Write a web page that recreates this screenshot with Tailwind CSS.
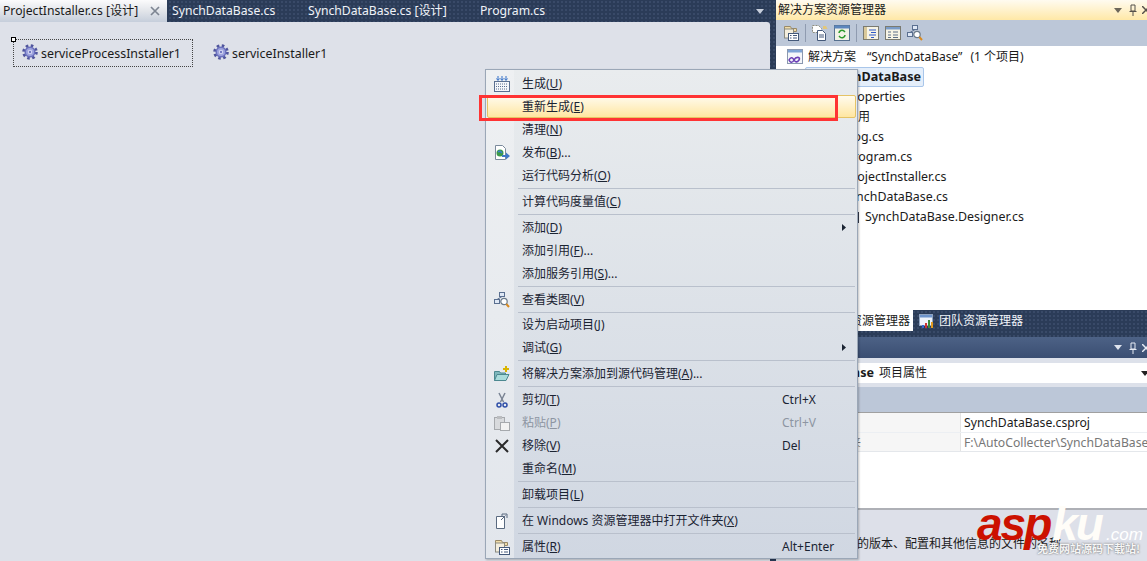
<!DOCTYPE html>
<html lang="zh-CN">
<head>
<meta charset="utf-8">
<script src="https://cdn.jsdelivr.net/npm/@tailwindcss/browser@4"></script>
</head>
<body class="m-0 overflow-hidden">
<svg class="absolute w-0 h-0">
  <defs>
    <symbol id="gear" viewBox="0 0 16 16">
      <circle cx="8" cy="8" r="6.300" fill="none" stroke="#4f549c" stroke-width="3" stroke-dasharray="2.500 2.450"/>
      <circle cx="8" cy="8" r="5.500" fill="#6a70bd"/>
      <circle cx="8" cy="8" r="4" fill="#9ea3de"/>
      <circle cx="8" cy="8" r="2.200" fill="#d8daf4"/>
      <circle cx="8" cy="8" r="1.200" fill="#7278c2"/>
    </symbol>
    <symbol id="props" viewBox="0 0 16 16">
      <path d="M1.500 1.500h6l1 2h5v3h-12z" fill="#f0dca8" stroke="#9a8a68"/>
      <rect x="1.500" y="4" width="9" height="9" fill="#f4eedd" stroke="#8a8a80"/>
      <rect x="5.500" y="8.500" width="10" height="7" fill="#fff" stroke="#44597a"/>
      <path d="M7 10.500h1.500M10 10.500h4M7 13h1.500M10 13h4" stroke="#44597a"/>
    </symbol>
    <symbol id="classview" viewBox="0 0 16 16">
      <rect x="5.500" y=".5" width="5" height="4" fill="#dfe8f5" stroke="#5a6f90"/>
      <rect x=".5" y="7.500" width="5" height="4" fill="#dfe8f5" stroke="#5a6f90"/>
      <path d="M8 4.500 3 7.500" stroke="#5a6f90"/>
      <circle cx="10" cy="9.500" r="3.200" fill="#fff" stroke="#6a7a8a" stroke-width="1.200"/>
      <path d="m12.300 12 2.700 3" stroke="#d98a20" stroke-width="2"/>
    </symbol>
  </defs>
</svg>

<div class="relative w-[1147px] h-[561px] overflow-hidden flex bg-[#2b3c58] bg-[radial-gradient(#394a68_1px,transparent_1px)] bg-[length:4px_4px] text-[12.4px] leading-[18px] text-[#1a1a1a] font-['Noto_Sans','Noto_Sans_CJK_SC',sans-serif]">

  <!-- left document well -->
  <div class="w-[770px] flex flex-col shrink-0">
    <div class="h-[22px] flex items-center text-[#f0f3f8] text-[12.2px] shrink-0">
      <div class="w-[167px] h-[22px] flex items-center pl-[3px] text-[#1a1a1a] bg-gradient-to-b from-[#fbfbfc] via-[#e2e5ea] to-[#c6cedb]">
        <span class="w-[147px] whitespace-nowrap">ProjectInstaller.cs [设计]</span>
        <svg class="w-[10px] h-[10px]" viewBox="0 0 10 10"><path d="m1 1 8 8M9 1 1 9" stroke="#7d8592" stroke-width="1.700"/></svg>
      </div>
      <span class="ml-[5px] w-[136px] whitespace-nowrap">SynchDataBase.cs</span>
      <span class="w-[172px] whitespace-nowrap">SynchDataBase.cs [设计]</span>
      <span class="w-[276px] whitespace-nowrap">Program.cs</span>
      <svg class="w-[8px] h-[5px]" viewBox="0 0 8 5"><path d="M0 0h8L4 5z" fill="#c8cfdc"/></svg>
    </div>
    <div class="flex-1 bg-[#dee1e9] rounded-tr-[3px] relative">
      <div class="flex items-start pt-[17px] pl-[13px]">
        <div class="relative w-[180px] h-[28px] border border-dotted border-[#444] flex items-center pl-[8px] gap-[3px]">
          <span class="absolute left-[-3px] top-[-3px] w-[5px] h-[5px] bg-white border border-black"></span>
          <svg class="w-[16px] h-[16px] -mt-[2px]"><use href="#gear"/></svg>
          <span class="whitespace-nowrap pt-[2px]">serviceProcessInstaller1</span>
        </div>
        <div class="flex items-center h-[28px] ml-[20px] gap-[3px]">
          <svg class="w-[16px] h-[16px] -mt-[2px]"><use href="#gear"/></svg>
          <span class="whitespace-nowrap pt-[2px]">serviceInstaller1</span>
        </div>
      </div>
    </div>
  </div>

  <div class="w-[6px] shrink-0"></div>

  <!-- right panels -->
  <div class="w-[371px] flex flex-col shrink-0 bg-white">
    <div class="h-[20px] flex items-center pl-[2px] text-[12px] bg-gradient-to-b from-[#fffbf0] to-[#ffe8a6] whitespace-nowrap shrink-0">
      <span class="flex-1">解决方案资源管理器</span>
      <svg class="w-[8px] h-[5px] mr-[7px]" viewBox="0 0 8 5"><path d="M0 0h8L4 5z" fill="#6d675a"/></svg>
      <svg class="w-[8px] h-[12px] mr-[5px]" viewBox="0 0 8 12"><path d="M2 1h4v6H2zM0.500 7.500h7M4 8v4" fill="none" stroke="#55504a"/></svg>
      <svg class="w-[8px] h-[8px] -mr-[3px]" viewBox="0 0 8 8"><path d="m0 0 8 8M8 0 0 8" stroke="#55504a" stroke-width="1.500"/></svg>
    </div>
    <div class="h-[26px] bg-[#bcc7d8] flex items-center pl-[7px] gap-[6px] shrink-0">
      <svg class="w-[16px] h-[16px]"><use href="#props"/></svg>
      <span class="w-px h-[18px] bg-[#8f9bb0]"></span>
      <svg class="w-[16px] h-[16px]" viewBox="0 0 16 16"><path d="M.5.500h6l3 3v4h-9z" fill="#fff" stroke="#8d8d80" stroke-dasharray="2 1"/><path d="M5.500 5.500h5l3 3v7h-8z" fill="#fff" stroke="#44597a"/><path d="M7 10h5M7 12h5" stroke="#44597a"/><path d="M11 1h3l1.500 3H11z" fill="#e3c77a"/></svg>
      <svg class="w-[16px] h-[16px]" viewBox="0 0 16 16"><rect x=".5" y=".5" width="15" height="15" fill="#f2f2e6" stroke="#56708f"/><rect x=".5" y=".5" width="15" height="3" fill="#5c86bd"/><path d="M5 8a3 3 0 0 1 5-2l1 1M11 10a3 3 0 0 1-5 2l-1-1" fill="none" stroke="#2d9a2d" stroke-width="1.600"/></svg>
      <span class="w-px h-[18px] bg-[#8f9bb0]"></span>
      <svg class="w-[16px] h-[16px]" viewBox="0 0 16 16"><rect x=".5" y="1.500" width="15" height="13" fill="#f7f4e6" stroke="#7a7a70"/><rect x="1" y="2" width="3" height="12" fill="#d9c89a"/><path d="M6 5h7M8 7.500h5M6 10h7M8 12.500h3" stroke="#2f59c8"/></svg>
      <svg class="w-[16px] h-[16px]" viewBox="0 0 16 16"><rect x=".5" y="1.500" width="15" height="13" fill="#f7f4e6" stroke="#7a7a70"/><rect x="1" y="2" width="14" height="2.500" fill="#7a9cc8"/><path d="M3 7h3M8 7h5M3 10h3M8 10h5M3 12.500h3M8 12.500h5" stroke="#5c6f88"/></svg>
      <svg class="w-[16px] h-[16px]"><use href="#classview"/></svg>
    </div>

    <div class="h-[264px] shrink-0 pt-[1px] whitespace-nowrap">
      <div class="h-[20px] flex items-center pl-[11px] gap-[5px]">
        <svg class="w-[16px] h-[16px] shrink-0" viewBox="0 0 16 16"><rect x=".5" y=".5" width="15" height="14" fill="#f4f6fa" stroke="#8a98b0"/><rect x="1" y="1" width="14" height="2.500" fill="#7ea4d6"/><path d="M2 11c2-4 4-2 5 0s3 3 5 0-3-4-5 0-4 2-5 0z" fill="none" stroke="#6a3fb5" stroke-width="1.600"/></svg>
        <span class="text-[12px]">解决方案<span class="ml-[11px]">“SynchDataBase”</span><span class="ml-[8px]">(1 个项目)</span></span>
      </div>
      <div class="h-[20px] flex items-center pl-[29px]">
        <span class="h-[20px] px-[2px] flex items-center font-bold text-[12.6px] border border-[#a9c6ea] rounded-[2px] bg-[#e4eefa] w-[119px] justify-end">SynchDataBase</span>
      </div>
      <div class="h-[20px] flex items-center pl-[69px]">Properties</div>
      <div class="h-[20px] flex items-center pl-[70px] text-[12px]">引用</div>
      <div class="h-[20px] flex items-center pl-[71px]">Log.cs</div>
      <div class="h-[20px] flex items-center pl-[70px]">Program.cs</div>
      <div class="h-[20px] flex items-center pl-[69px]">ProjectInstaller.cs</div>
      <div class="h-[20px] flex items-center pl-[67px]">SynchDataBase.cs</div>
      <div class="h-[20px] flex items-center pl-[89px] relative">
        <span class="absolute left-[81px] w-[2px] h-[11px] bg-[#33394a]"></span>SynchDataBase.Designer.cs
      </div>
    </div>

    <div class="h-[27px] shrink-0 flex items-start bg-[#2b3c58] bg-[radial-gradient(#394a68_1px,transparent_1px)] bg-[length:4px_4px] text-[12px] whitespace-nowrap">
      <div class="h-[21px] w-[137px] bg-white flex items-center justify-end pr-[3px]">解决方案资源管理器</div>
      <div class="h-[21px] flex items-center pl-[6px] gap-[4px] text-[#f0f3f8]">
        <svg class="w-[16px] h-[16px]" viewBox="0 0 16 16"><rect x=".5" y="1.500" width="13" height="11" fill="#eef3fa" stroke="#8fa3c0"/><rect x="1" y="2" width="12" height="2.500" fill="#6d94cc"/><path d="M6 15v-5h2v5z" fill="#c33"/><path d="M9 15v-8h2v8z" fill="#3a8a3a"/><path d="M12 15V9h2v6z" fill="#e09a20"/><path d="M3 15v-3h2v3z" fill="#36c"/></svg>
        <span>团队资源管理器</span>
      </div>
    </div>
    <div class="h-[21px] shrink-0 flex items-center justify-end bg-gradient-to-b from-[#4d6286] to-[#3a4e72]">
      <svg class="w-[8px] h-[5px] mr-[7px]" viewBox="0 0 8 5"><path d="M0 0h8L4 5z" fill="#dfe4ee"/></svg>
      <svg class="w-[8px] h-[12px] mr-[5px]" viewBox="0 0 8 12"><path d="M2 1h4v6H2zM0.500 7.500h7M4 8v4" fill="none" stroke="#e6ebf4"/></svg>
      <svg class="w-[8px] h-[8px] -mr-[3px]" viewBox="0 0 8 8"><path d="m0 0 8 8M8 0 0 8" stroke="#e6ebf4" stroke-width="1.500"/></svg>
    </div>
    <div class="h-[29px] shrink-0 bg-[#dde1ea] pt-[5px]">
      <div class="h-[20px] bg-white flex items-center whitespace-nowrap pl-[27px] relative">
        <span class="font-bold text-[12.6px] w-[71px] flex justify-end">SynchDataBase</span><span class="ml-[5px] text-[12px]">项目属性</span>
        <svg class="absolute right-[-2px] w-[8px] h-[5px]" viewBox="0 0 8 5"><path d="M0 0h8L4 5z" fill="#222"/></svg>
      </div>
    </div>
    <div class="h-[26px] shrink-0 bg-[#bcc7d8] border-b border-[#a0a0a0]"></div>
    <div class="flex-1 flex flex-col bg-white whitespace-nowrap text-[12.2px]">
      <div class="h-[20px] flex border-b border-[#eceff3] shrink-0">
        <div class="w-[185px] shrink-0 bg-[#f6f6f6] border-r border-[#e4e4e4]"></div>
        <div class="pl-[3px] pt-[1px]">SynchDataBase.csproj</div>
      </div>
      <div class="h-[19px] flex border-b border-[#e4e7eb] shrink-0 text-[#777]">
        <div class="w-[185px] shrink-0 bg-[#f6f6f6] border-r border-[#e4e4e4] flex justify-end pr-[99px] text-[11.500px]">项目文件夹</div>
        <div class="pl-[3px] pt-[1px]">F:\AutoCollecter\SynchDataBase</div>
      </div>
      <div class="flex-1"></div>
      <div class="h-[53px] shrink-0 border-t-2 border-[#aeb0b6] bg-[#dde0e9] pt-[25px] pl-[81px] text-[12px] leading-[18px]">的版本、配置和其他信息的文件的名称</div>
    </div>
  </div>

  <!-- context menu -->
  <div class="absolute left-[485px] top-[69px] w-[373px] h-[490px] border border-[#9ba7b7] bg-gradient-to-b from-[#e9ecee] to-[#d0d7e2] pt-[2px] px-px text-[12px] text-[#1b2433] whitespace-nowrap shadow-[1px_1px_2px_rgba(0,0,0,0.25)]">
    <div class="absolute left-0 top-0 bottom-0 w-[28px] bg-gradient-to-b from-[#eef0f2] to-[#e2e6ec]"></div>
    <div class="relative">
      <div class="h-[23px] flex items-center"><div class="w-[29px] flex justify-center"><svg class="w-[16px] h-[16px]" viewBox="0 0 16 16"><rect x=".5" y="5.500" width="15" height="10" fill="#f5f7fb" stroke="#5a6f90"/><path d="M2 8h12M2 10.500h12M2 13h12" stroke="#5a6f90" stroke-dasharray="1 1"/><path d="M4 0v4M2.500 2.500 4 4.500l1.500-2M8 0v4M6.500 2.500 8 4.500l1.500-2M12 0v4M10.500 2.500 12 4.500l1.500-2" fill="none" stroke="#3470c8"/></svg></div><span class="ml-[6px]">生成(<span class="underline">U</span>)</span></div>
      <div class="h-[23px] flex items-center rounded-[2px] border border-[#e5c365] bg-gradient-to-b from-[#fffbee] to-[#ffe6a0]"><div class="w-[28px]"></div><span class="ml-[6px]">重新生成(<span class="underline">E</span>)</span></div>
      <div class="h-[23px] flex items-center"><div class="w-[29px]"></div><span class="ml-[6px]">清理(<span class="underline">N</span>)</span></div>
      <div class="h-[23px] flex items-center"><div class="w-[29px] flex justify-center"><svg class="w-[16px] h-[16px]" viewBox="0 0 16 16"><path d="M1.500.500h7l3 3v11h-10z" fill="#fff" stroke="#7a8a9c"/><circle cx="6" cy="8" r="3.500" fill="#3b9a4a"/><path d="M4 7c2-2 3 0 4 1" stroke="#3a7fd0" fill="none" stroke-width="1.500"/><path d="M8 10h4V7.500l4 3.500-4 3.500V12H8z" fill="#3f78c8"/></svg></div><span class="ml-[6px]">发布(<span class="underline">B</span>)...</span></div>
      <div class="h-[23px] flex items-center"><div class="w-[29px]"></div><span class="ml-[6px]">运行代码分析(<span class="underline">O</span>)</span></div>
      <div class="h-[3px] flex items-center pl-[31px] pr-[1px]"><div class="flex-1 h-px bg-[#b9c0cc]"></div></div>
      <div class="h-[23px] flex items-center"><div class="w-[29px]"></div><span class="ml-[6px]">计算代码度量值(<span class="underline">C</span>)</span></div>
      <div class="h-[3px] flex items-center pl-[31px] pr-[1px]"><div class="flex-1 h-px bg-[#b9c0cc]"></div></div>
      <div class="h-[23px] flex items-center"><div class="w-[29px]"></div><span class="ml-[6px] flex-1">添加(<span class="underline">D</span>)</span><svg class="w-[4px] h-[7px] mr-[10px]" viewBox="0 0 4 7"><path d="M0 0l4 3.500L0 7z" fill="#1b2433"/></svg></div>
      <div class="h-[23px] flex items-center"><div class="w-[29px]"></div><span class="ml-[6px]">添加引用(<span class="underline">F</span>)...</span></div>
      <div class="h-[23px] flex items-center"><div class="w-[29px]"></div><span class="ml-[6px]">添加服务引用(<span class="underline">S</span>)...</span></div>
      <div class="h-[3px] flex items-center pl-[31px] pr-[1px]"><div class="flex-1 h-px bg-[#b9c0cc]"></div></div>
      <div class="h-[23px] flex items-center"><div class="w-[29px] flex justify-center"><svg class="w-[16px] h-[16px]"><use href="#classview"/></svg></div><span class="ml-[6px]">查看类图(<span class="underline">V</span>)</span></div>
      <div class="h-[3px] flex items-center pl-[31px] pr-[1px]"><div class="flex-1 h-px bg-[#b9c0cc]"></div></div>
      <div class="h-[22px] flex items-center"><div class="w-[29px]"></div><span class="ml-[6px]">设为启动项目(<span class="underline">J</span>)</span></div>
      <div class="h-[23px] flex items-center"><div class="w-[29px]"></div><span class="ml-[6px] flex-1">调试(<span class="underline">G</span>)</span><svg class="w-[4px] h-[7px] mr-[10px]" viewBox="0 0 4 7"><path d="M0 0l4 3.500L0 7z" fill="#1b2433"/></svg></div>
      <div class="h-[3px] flex items-center pl-[31px] pr-[1px]"><div class="flex-1 h-px bg-[#b9c0cc]"></div></div>
      <div class="h-[23px] flex items-center"><div class="w-[29px] flex justify-center"><svg class="w-[16px] h-[16px]" viewBox="0 0 16 16"><path d="M.5 14.500V5.500h5l1 1.500h5v7.500z" fill="#7fb8bd" stroke="#4c8890"/><path d="M.5 14.500 3 8.500h12l-3 6z" fill="#a9dcdc" stroke="#4c8890"/><path d="M12 0v6M9 3h6" stroke="#d9b400" stroke-width="2"/></svg></div><span class="ml-[6px]">将解决方案添加到源代码管理(<span class="underline">A</span>)...</span></div>
      <div class="h-[3px] flex items-center pl-[31px] pr-[1px]"><div class="flex-1 h-px bg-[#b9c0cc]"></div></div>
      <div class="h-[23px] flex items-center"><div class="w-[29px] flex justify-center"><svg class="w-[16px] h-[16px]" viewBox="0 0 16 16"><path d="M5 1l4.500 9M11 1 6.500 10" stroke="#7a8494" stroke-width="1.500"/><circle cx="5" cy="13" r="2" fill="none" stroke="#2f4fa8" stroke-width="1.500"/><circle cx="11" cy="13" r="2" fill="none" stroke="#2f4fa8" stroke-width="1.500"/></svg></div><span class="ml-[6px] w-[260px]">剪切(<span class="underline">T</span>)</span><span>Ctrl+X</span></div>
      <div class="h-[23px] flex items-center text-[#8d95a2]"><div class="w-[29px] flex justify-center"><svg class="w-[16px] h-[16px]" viewBox="0 0 16 16"><rect x=".5" y="2.500" width="10" height="12" fill="#d8dadd" stroke="#a6a9ad"/><rect x="3" y="1" width="5" height="3" fill="#bbbdc0"/><rect x="6.500" y="7.500" width="9" height="8" fill="#f2f2f2" stroke="#a6a9ad"/></svg></div><span class="ml-[6px] w-[260px]">粘贴(<span class="underline">P</span>)</span><span>Ctrl+V</span></div>
      <div class="h-[23px] flex items-center"><div class="w-[29px] flex justify-center"><svg class="w-[14px] h-[14px]" viewBox="0 0 14 14"><path d="m1 1 12 12M13 1 1 13" stroke="#2a2a2a" stroke-width="2"/></svg></div><span class="ml-[6px] w-[260px]">移除(<span class="underline">V</span>)</span><span>Del</span></div>
      <div class="h-[23px] flex items-center"><div class="w-[29px]"></div><span class="ml-[6px]">重命名(<span class="underline">M</span>)</span></div>
      <div class="h-[3px] flex items-center pl-[31px] pr-[1px]"><div class="flex-1 h-px bg-[#b9c0cc]"></div></div>
      <div class="h-[23px] flex items-center"><div class="w-[29px]"></div><span class="ml-[6px]">卸载项目(<span class="underline">L</span>)</span></div>
      <div class="h-[3px] flex items-center pl-[31px] pr-[1px]"><div class="flex-1 h-px bg-[#b9c0cc]"></div></div>
      <div class="h-[23px] flex items-center"><div class="w-[29px] flex justify-center"><svg class="w-[14px] h-[16px]" viewBox="0 0 14 16"><path d="M1.500 3.500h8v12h-8z" fill="#fff" stroke="#5a6a80"/><path d="M7 4V1h5v4M10.500 2.500 6 7" fill="none" stroke="#5a6a80"/></svg></div><span class="ml-[6px]">在 Windows 资源管理器中打开文件夹(<span class="underline">X</span>)</span></div>
      <div class="h-[3px] flex items-center pl-[31px] pr-[1px]"><div class="flex-1 h-px bg-[#b9c0cc]"></div></div>
      <div class="h-[23px] flex items-center"><div class="w-[29px] flex justify-center"><svg class="w-[16px] h-[16px]"><use href="#props"/></svg></div><span class="ml-[6px] w-[260px]">属性(<span class="underline">R</span>)</span><span>Alt+Enter</span></div>
    </div>
  </div>

  <!-- red annotation -->
  <div class="absolute left-[479px] top-[95px] w-[359px] h-[26px] border-[3px] border-[#ff3333]"></div>

  <!-- watermark -->
  <div class="absolute left-[977px] top-[501px] w-[170px] h-[60px] font-['Liberation_Sans',sans-serif] whitespace-nowrap">
    <div class="flex items-baseline italic font-bold text-[46px] leading-[46px] tracking-[-2px]">
      <span class="text-[#cc1100]">asp</span><span class="text-[#fffdf8] ml-[2px]">ku</span><span class="text-white text-[17px] font-normal tracking-normal ml-[4px]">.com</span>
    </div>
    <div class="absolute left-[60px] top-[40px] text-[11px] leading-[14px] text-[#f6f6f6] font-bold [text-shadow:0_0_2px_#555] font-['Noto_Sans_CJK_SC',sans-serif]">免费网站源码下载站!</div>
  </div>
</div>
</body>
</html>
